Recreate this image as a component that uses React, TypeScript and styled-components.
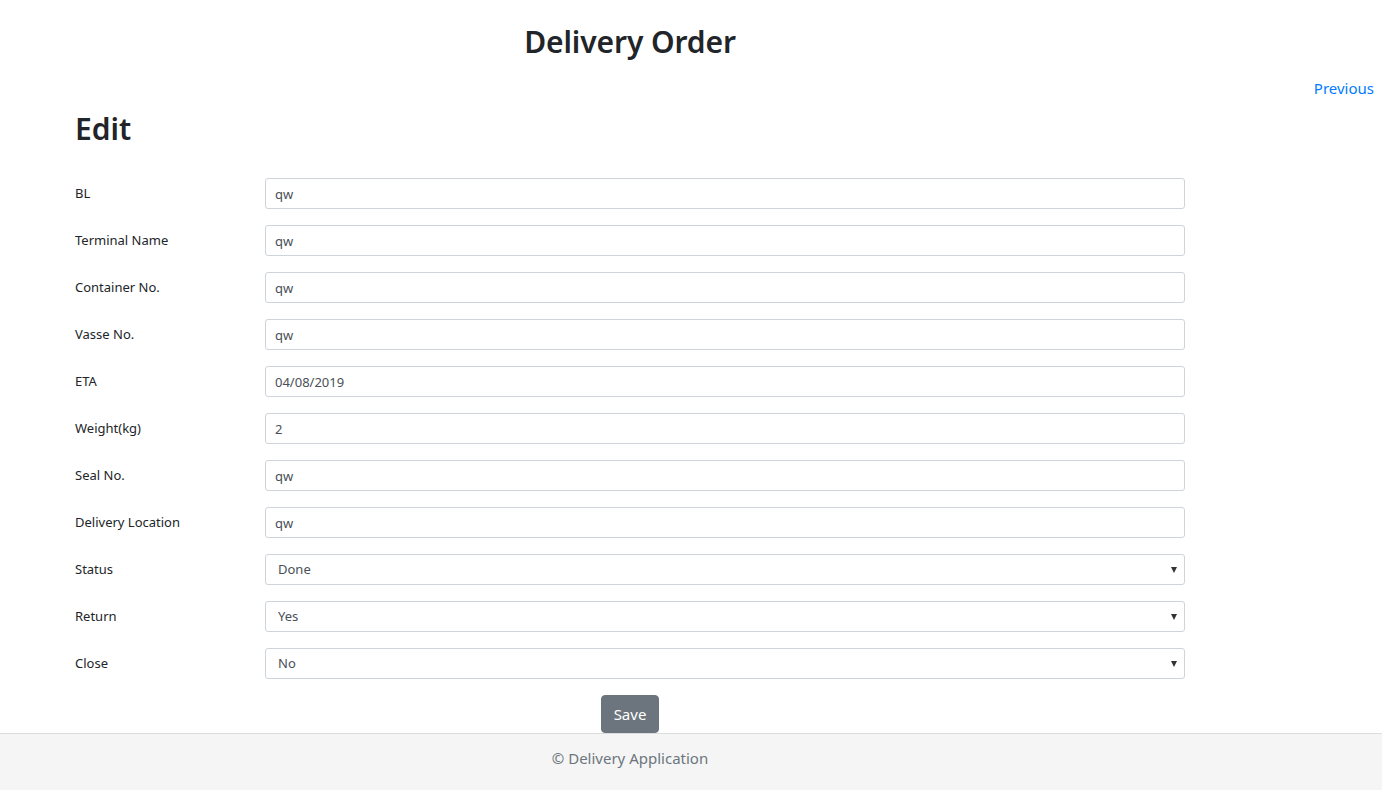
import React from "react";
import styled, { createGlobalStyle } from "styled-components";

const Global = createGlobalStyle`
  html, body { margin: 0; padding: 0; background: #fff; }
  body {
    font-family: "Noto Sans", "Open Sans", sans-serif;
    color: #212529;
    font-size: 16px;
    line-height: 1.5;
  }
  * { box-sizing: border-box; }
`;

const Page = styled.div`
  min-height: 790px;
  display: flex;
  flex-direction: column;
`;

const Main = styled.main`
  flex: 1;
  display: flex;
  flex-direction: column;
`;

const Container = styled.div`
  width: 1140px;
  margin-left: 60px;
  padding: 0 15px;
`;

const Title = styled.h2`
  margin: 23px 0 0;
  text-align: center;
  font-size: 30px;
  font-weight: 600;
  line-height: 38px;
  letter-spacing: -0.1px;
`;

const PrevBar = styled.div`
  display: flex;
  justify-content: flex-end;
  padding-right: 8px;
  margin-top: 15px;
`;

const PrevLink = styled.a`
  color: #007bff;
  text-decoration: none;
  font-size: 15px;
  line-height: 24px;
  cursor: pointer;
`;

const EditTitle = styled.h2`
  margin: 10px 0 0;
  font-size: 30px;
  font-weight: 600;
  line-height: 38px;
`;

const Form = styled.form`
  margin-top: 30px;
  display: flex;
  flex-direction: column;
  gap: 16px;
`;

const Row = styled.div`
  display: grid;
  grid-template-columns: 190px 920px;
  align-items: center;
`;

const Label = styled.label`
  font-size: 13px;
  line-height: 21px;
  color: #212529;
`;

const Input = styled.input`
  height: 31px;
  width: 100%;
  padding: 4px 9px;
  font-family: inherit;
  font-size: 13px;
  line-height: 21px;
  color: #495057;
  background: #fff;
  border: 1px solid #ced4da;
  border-radius: 3px;
  outline: none;
`;

const SelectWrap = styled.div`
  position: relative;
  width: 100%;
`;

const Select = styled.select`
  appearance: none;
  -webkit-appearance: none;
  height: 31px;
  width: 100%;
  padding: 4px 12px;
  font-family: inherit;
  font-size: 13px;
  line-height: 21px;
  color: #495057;
  background: #fff;
  border: 1px solid #ced4da;
  border-radius: 3px;
  outline: none;
`;

const Caret = styled.span`
  position: absolute;
  right: 8px;
  top: 13px;
  width: 0;
  height: 0;
  border-left: 3.5px solid transparent;
  border-right: 3.5px solid transparent;
  border-top: 6px solid #333;
  pointer-events: none;
`;

const Actions = styled.div`
  display: flex;
  justify-content: center;
`;

const SaveButton = styled.button`
  height: 38px;
  padding: 0 12px;
  font-family: inherit;
  font-size: 15px;
  color: #fff;
  background: #6c757d;
  border: 1px solid #6c757d;
  border-radius: 4px;
  cursor: pointer;
`;

const Footer = styled.footer`
  height: 57px;
  border-top: 1px solid #dcdcdc;
  background: #f5f5f5;
  color: #6c757d;
`;

const FooterInner = styled.div`
  width: 1140px;
  margin-left: 60px;
  text-align: center;
  font-size: 15px;
  line-height: 24px;
  padding-top: 12px;
`;

type Field =
  | { label: string; kind: "input"; value: string }
  | { label: string; kind: "select"; value: string; options: string[] };

const fields: Field[] = [
  { label: "BL", kind: "input", value: "qw" },
  { label: "Terminal Name", kind: "input", value: "qw" },
  { label: "Container No.", kind: "input", value: "qw" },
  { label: "Vasse No.", kind: "input", value: "qw" },
  { label: "ETA", kind: "input", value: "04/08/2019" },
  { label: "Weight(kg)", kind: "input", value: "2" },
  { label: "Seal No.", kind: "input", value: "qw" },
  { label: "Delivery Location", kind: "input", value: "qw" },
  { label: "Status", kind: "select", value: "Done", options: ["Pending", "Done"] },
  { label: "Return", kind: "select", value: "Yes", options: ["Yes", "No"] },
  { label: "Close", kind: "select", value: "No", options: ["Yes", "No"] },
];

export default function App() {
  return (
    <Page>
      <Global />
      <Main>
        <Container>
          <Title>Delivery Order</Title>
        </Container>
        <PrevBar>
          <PrevLink>Previous</PrevLink>
        </PrevBar>
        <Container>
          <EditTitle>Edit</EditTitle>
          <Form onSubmit={(e) => e.preventDefault()}>
            {fields.map((f) => (
              <Row key={f.label}>
                <Label>{f.label}</Label>
                {f.kind === "input" ? (
                  <Input defaultValue={f.value} />
                ) : (
                  <SelectWrap>
                    <Select defaultValue={f.value}>
                      {f.options.map((o) => (
                        <option key={o}>{o}</option>
                      ))}
                    </Select>
                    <Caret />
                  </SelectWrap>
                )}
              </Row>
            ))}
            <Actions>
              <SaveButton type="submit">Save</SaveButton>
            </Actions>
          </Form>
        </Container>
      </Main>
      <Footer>
        <FooterInner>© Delivery Application</FooterInner>
      </Footer>
    </Page>
  );
}
